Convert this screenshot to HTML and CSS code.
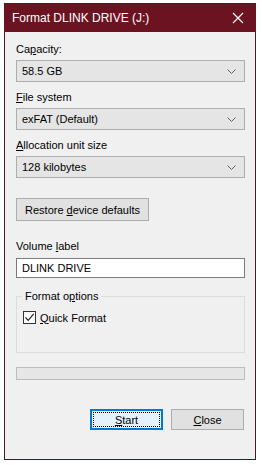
FILE: index.html
```html
<!DOCTYPE html>
<html lang="en">
<head>
    <meta charset="UTF-8">
    <meta name="viewport" content="width=device-width, initial-scale=1.0">
    <title>Format DLINK DRIVE (J:)</title>
    <link rel="stylesheet" href="styles.css">
</head>
<body>
    <div class="window">
        <div class="titlebar">
            <span class="title">Format DLINK DRIVE (J:)</span>
            <svg class="close-x" width="12" height="12" viewBox="0 0 12 12">
                <path d="M1 1L11 11M11 1L1 11" stroke="#fff" stroke-width="1.2" fill="none"/>
            </svg>
        </div>

        <div class="content">
            <div class="label first">Ca<u>p</u>acity:</div>
            <div class="combo">
                <span>58.5 GB</span>
                <svg class="chevron" width="9" height="5" viewBox="0 0 9 5"><path d="M0.5 0.5L4.5 4.5L8.5 0.5" stroke="#606060" fill="none"/></svg>
            </div>

            <div class="label"><u>F</u>ile system</div>
            <div class="combo">
                <span>exFAT (Default)</span>
                <svg class="chevron" width="9" height="5" viewBox="0 0 9 5"><path d="M0.5 0.5L4.5 4.5L8.5 0.5" stroke="#606060" fill="none"/></svg>
            </div>

            <div class="label"><u>A</u>llocation unit size</div>
            <div class="combo">
                <span>128 kilobytes</span>
                <svg class="chevron" width="9" height="5" viewBox="0 0 9 5"><path d="M0.5 0.5L4.5 4.5L8.5 0.5" stroke="#606060" fill="none"/></svg>
            </div>

            <div class="btn restore"><span>Restore <u>d</u>evice defaults</span></div>

            <div class="label vol">Volume <u>l</u>abel</div>
            <div class="textbox">DLINK DRIVE</div>

            <div class="group">
                <div class="legend">Format o<u>p</u>tions</div>
                <div class="check-row">
                    <span class="checkbox">
                        <svg width="11" height="11" viewBox="0 0 11 11"><path d="M1.5 5.5L4.2 8.3L9.7 1.8" stroke="#222" stroke-width="1.2" fill="none"/></svg>
                    </span>
                    <span><u>Q</u>uick Format</span>
                </div>
            </div>

            <div class="progress"></div>

            <div class="actions">
                <div class="btn action focused"><span class="focus-rect"><span><u>S</u>tart</span></span></div>
                <div class="btn action"><span><u>C</u>lose</span></div>
            </div>
        </div>
    </div>
</body>
</html>
```

FILE: styles.css
```css
body {
    margin: 0;
    background: #fff;
    font-family: "Liberation Sans", Arial, sans-serif;
    font-size: 11px;
    color: #000;
}
.window {
    margin: 3px 0 0 4px;
    width: 252px;
    height: 457px;
    box-sizing: border-box;
    background: #f0f0f0;
    border: 1px solid #4a1a22;
    border-top: none;
    display: flex;
    flex-direction: column;
}
.titlebar {
    height: 29px;
    background: #6b1321;
    color: #fff;
    display: flex;
    align-items: center;
    justify-content: space-between;
    padding: 0 12px 0 8px;
    margin: 0 -1px;
}
.title {
    font-size: 12px;
}
.close-x {
    display: block;
}
.content {
    padding: 10px 10px 0 11px;
    display: flex;
    flex-direction: column;
}
.label {
    line-height: 14px;
    margin: 8px 0 4px;
}
.label.first {
    margin-top: 0;
}
.combo {
    height: 22px;
    box-sizing: border-box;
    background: #e5e5e5;
    border: 1px solid #adadad;
    display: flex;
    align-items: center;
    justify-content: space-between;
    padding: 0 8px 0 5px;
}
.chevron {
    display: block;
}
.btn {
    background: #e1e1e1;
    border: 1px solid #adadad;
    box-sizing: border-box;
    display: flex;
    align-items: center;
    justify-content: center;
}
.restore {
    margin-top: 20px;
    width: 133px;
    height: 23px;
}
.label.vol {
    margin-top: 18px;
    margin-bottom: 5px;
}
.textbox {
    height: 20px;
    box-sizing: border-box;
    background: #fff;
    border: 1px solid #7a7a7a;
    padding: 0 5px;
    display: flex;
    align-items: center;
}
.group {
    margin-top: 18px;
    height: 57px;
    box-sizing: border-box;
    border: 1px solid #dcdcdc;
    position: relative;
    padding: 14px 0 0 6px;
}
.legend {
    position: absolute;
    top: -8px;
    left: 5px;
    padding: 0 3px;
    background: #f0f0f0;
    line-height: 14px;
}
.check-row {
    display: flex;
    align-items: center;
    gap: 4px;
}
.checkbox {
    width: 13px;
    height: 13px;
    box-sizing: border-box;
    border: 1px solid #333;
    background: #fff;
    display: flex;
    align-items: center;
    justify-content: center;
}
.checkbox svg {
    display: block;
}
.progress {
    margin-top: 14px;
    height: 13px;
    box-sizing: border-box;
    background: #e6e6e6;
    border: 1px solid #bcbcbc;
}
.actions {
    margin-top: 29px;
    display: flex;
    justify-content: flex-end;
    gap: 8px;
    padding-right: 1px;
}
.action {
    width: 73px;
    height: 21px;
}
.focused {
    background: #e5f1fb;
    border: 2px solid #0078d7;
    padding: 1px;
}
.focus-rect {
    flex: 1;
    align-self: stretch;
    border: 1px dotted #000;
    display: flex;
    align-items: center;
    justify-content: center;
}
```
